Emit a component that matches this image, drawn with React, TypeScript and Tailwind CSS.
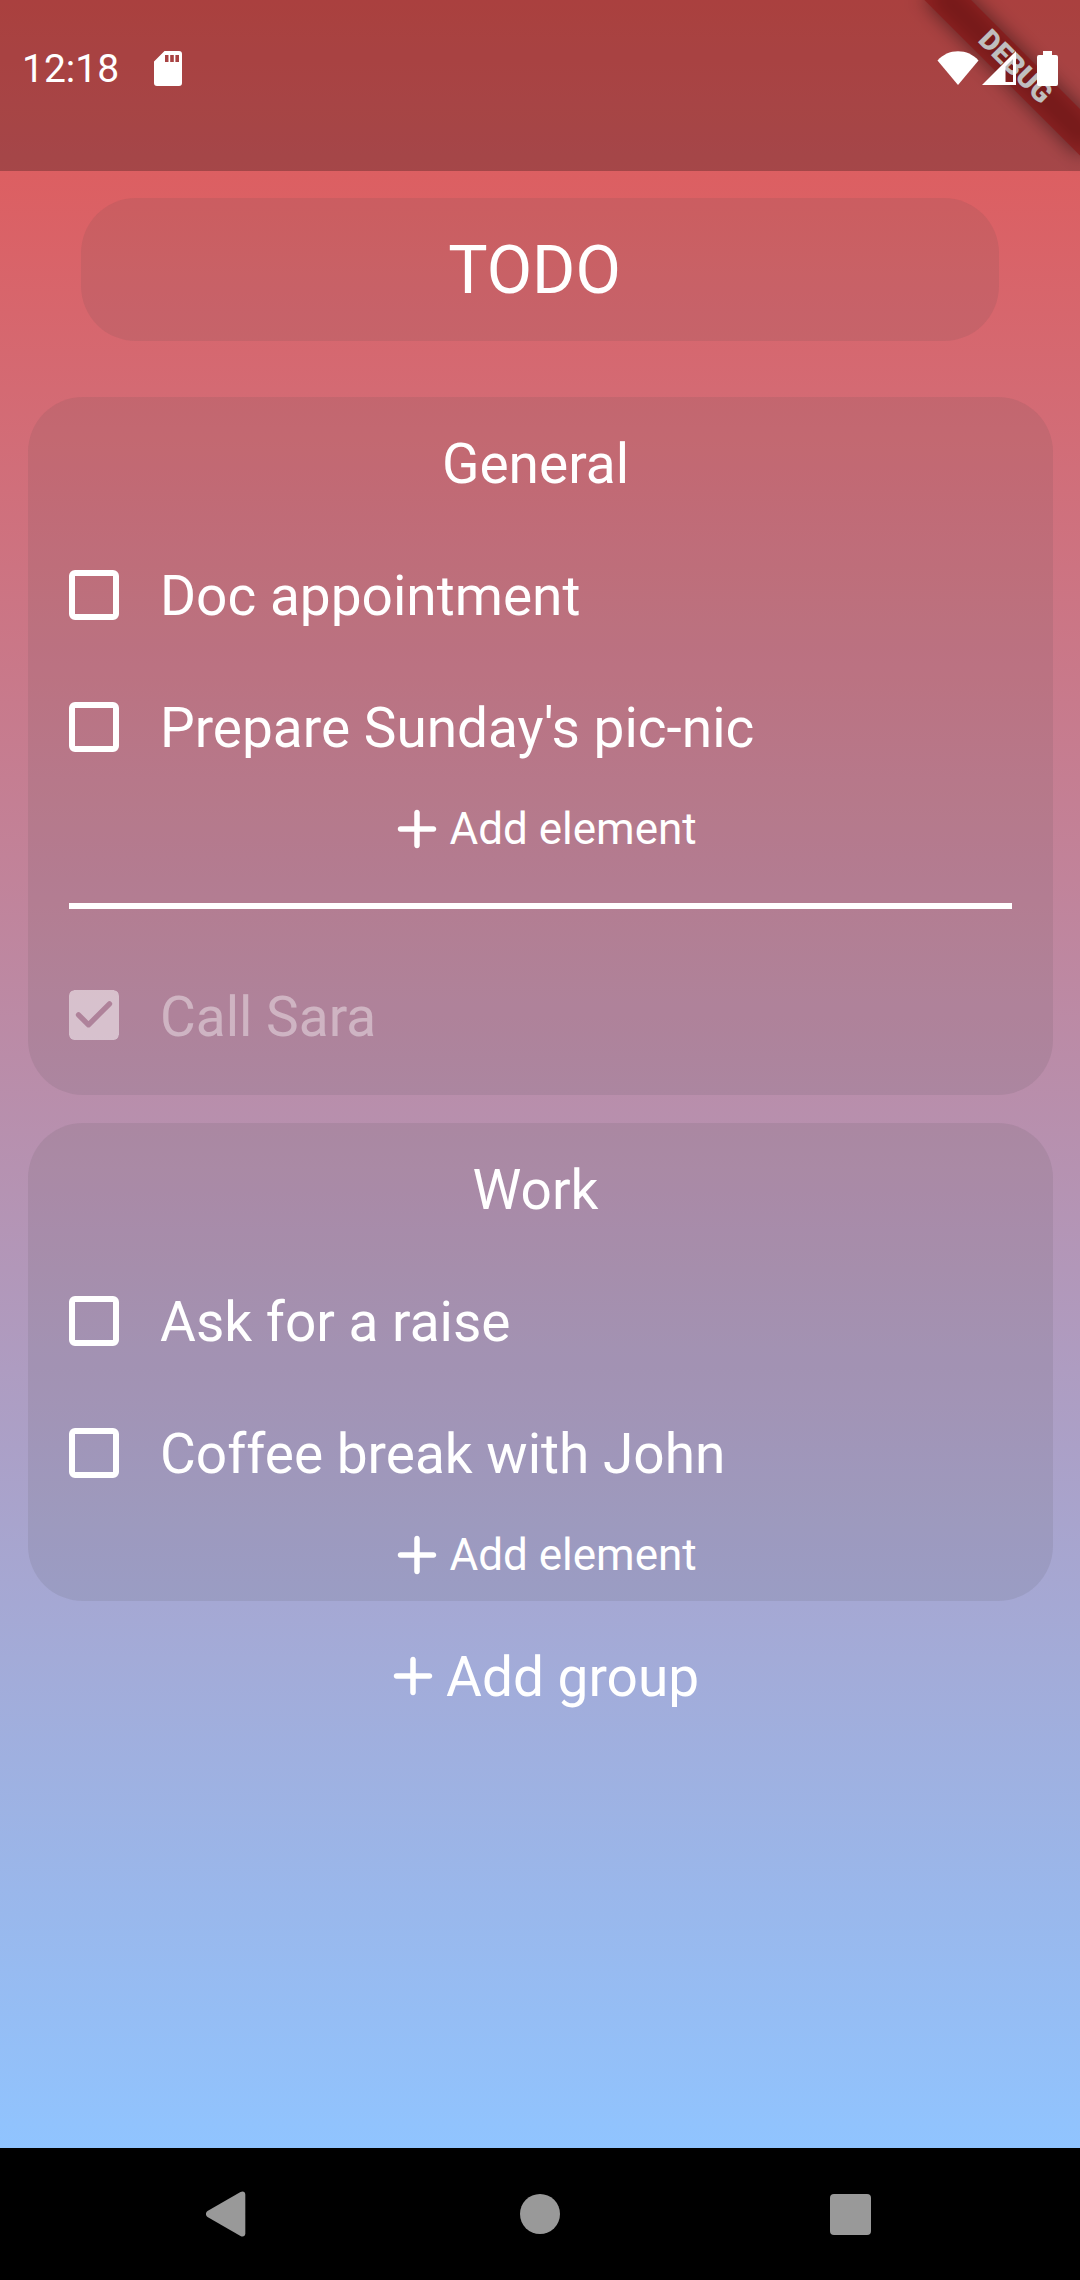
import React from "react";

function PlusIcon({ className = "" }: { className?: string }) {
  return (
    <svg viewBox="0 0 24 24" className={`size-[66px] shrink-0 ${className}`} fill="currentColor">
      <path d="M18 13h-5v5c0 .55-.45 1-1 1s-1-.45-1-1v-5H6c-.55 0-1-.45-1-1s.45-1 1-1h5V6c0-.55.45-1 1-1s1 .45 1 1v5h5c.55 0 1 .45 1 1s-.45 1-1 1z" />
    </svg>
  );
}

function CheckedBox() {
  return (
    <svg viewBox="0 0 50 50" className="size-[50px] shrink-0 text-white/50">
      <mask id="tick">
        <rect width="50" height="50" rx="5.5" fill="#fff" />
        <path d="M9.5 24.8 19.5 34.8 40.5 13.8" fill="none" stroke="#000" strokeWidth="5.3" strokeLinecap="round" strokeLinejoin="round" />
      </mask>
      <rect width="50" height="50" rx="5.5" fill="currentColor" mask="url(#tick)" />
    </svg>
  );
}

function Item({ label, done = false }: { label: string; done?: boolean }) {
  return (
    <li className="flex h-[132px] items-center pl-[41px]">
      {done ? <CheckedBox /> : <span className="size-[50px] shrink-0 rounded-[6px] border-[6px] border-white" />}
      <span className={done ? "pt-[5px] pl-[41.5px] text-white/40" : "pt-[2px] pl-[41.5px]"}>{label}</span>
    </li>
  );
}

function Group({ title, items, done = [], className = "" }: { title: string; items: string[]; done?: string[]; className?: string }) {
  return (
    <section className={`mx-[27.5px] rounded-[55px] bg-[#4a4a4a]/11 ${className}`}>
      <h2 className="flex h-[132px] items-center justify-center pt-[2px] pr-[9px]">{title}</h2>
      <ul>
        {items.map((i) => (
          <Item key={i} label={i} />
        ))}
      </ul>
      <button className="flex h-[72px] w-full items-center pl-[356px] text-[44px] leading-none">
        <PlusIcon />
        Add element
      </button>
      {done.length > 0 && (
        <>
          <hr className="mx-[41px] mt-[38px] mb-[40px] h-[5.5px] border-0 bg-white" />
          <ul>
            {done.map((i) => (
              <Item key={i} label={i} done />
            ))}
          </ul>
        </>
      )}
    </section>
  );
}

function StatusBar() {
  return (
    <header className="relative z-10 h-[171px] bg-black/25">
      <div className="flex h-[136px] items-center pl-[22px] pr-[22px]">
        <span className="pt-[3px] text-[39px] leading-none">12:18</span>
        <svg viewBox="0 0 28 35" className="ml-[35px] h-[35px] w-[28px]" fill="#fff">
          <path fillRule="evenodd" d="M10.5 0H25a3 3 0 0 1 3 3V32a3 3 0 0 1-3 3H3a3 3 0 0 1-3-3V10.5ZM11 4v7h3.5V4Zm5.2 0v7h3.6V4Zm5.2 0v7h3.6V4Z" />
        </svg>
        <svg viewBox="0 0 42 34" className="ml-auto h-[34px] w-[42px]" fill="#fff">
          <path d="M0.5 9.5C6 3.5 13 .3 21 .3S36 3.5 41.500 9.500L21 34Z" />
        </svg>
        <svg viewBox="0 0 34 34" className="ml-[3px] h-[34px] w-[34px]" fill="#fff">
          <path fillRule="evenodd" d="M34 0V34H0ZM31 8 23.500 15.500V31H31Z" />
        </svg>
        <svg viewBox="0 0 21 35" className="ml-[21px] h-[35px] w-[21px]" fill="#fff">
          <path d="M6 0H15V4H19a2 2 0 0 1 2 2V33a2 2 0 0 1-2 2H2a2 2 0 0 1-2-2V6a2 2 0 0 1 2-2H6Z" />
        </svg>
      </div>
    </header>
  );
}

function DebugBanner() {
  return (
    <div className="pointer-events-none absolute top-0 right-0 size-[220px] overflow-hidden">
      <div className="absolute top-[77px] left-[110px] h-[33px] w-[220px] origin-[110px_-77px] rotate-45">
        <div className="absolute inset-0 bg-black/50 blur-[10px]" />
        <div className="relative flex h-full items-center justify-center bg-[#b71c1c]/63 pl-[3px] text-[28.2px] leading-none font-black">
          DEBUG
        </div>
      </div>
    </div>
  );
}

export default function App() {
  return (
    <div className="flex h-[2280px] w-[1080px] flex-col overflow-hidden bg-black font-['Roboto',sans-serif] text-[55px] leading-none text-white">
      <div className="relative flex-1 bg-linear-to-b/srgb from-[#e35654] to-[#90c4ff]">
        <DebugBanner />
        <StatusBar />
        <main>
          <h1 className="mx-[81px] mt-[27px] flex h-[143px] items-center justify-center rounded-[55px] bg-[#4a4a4a]/11 pt-[2px] pr-[11px] text-[66px]">
            TODO
          </h1>
          <Group
            title="General"
            items={["Doc appointment", "Prepare Sunday's pic-nic"]}
            done={["Call Sara"]}
            className="mt-[56px] h-[698px]"
          />
          <Group title="Work" items={["Ask for a raise", "Coffee break with John"]} className="mt-[28px] h-[478px]" />
          <button className="mt-[42px] flex h-[66px] items-center pl-[380px]">
            <PlusIcon />
            <span className="pt-[2px]">Add group</span>
          </button>
        </main>
      </div>
      <nav className="flex h-[132px] items-center pl-[206px] pr-[209px]">
        <svg viewBox="0 0 40 46" className="h-[46px] w-[40px]" fill="#999">
          <path d="M1.500 20 34.500 1C37 -.3 39.300 .8 39.300 3.500V42.500C39.300 45.200 37 46.300 34.500 45L1.500 26C-.6 24.500 -.6 21.500 1.500 20Z" />
        </svg>
        <span className="ml-[274px] size-[40px] rounded-full bg-[#999]" />
        <span className="ml-auto size-[41px] rounded-[4px] bg-[#999]" />
      </nav>
    </div>
  );
}
